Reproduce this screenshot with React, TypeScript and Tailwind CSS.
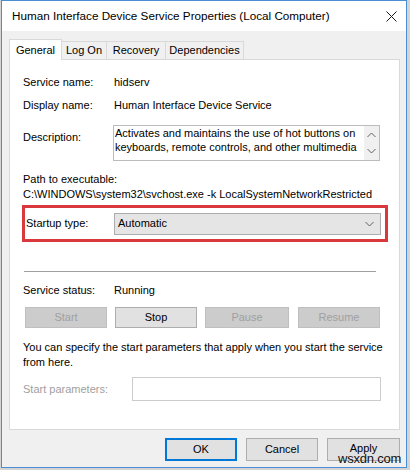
import React from "react";

const font = { fontFamily: '"Liberation Sans", Arial, sans-serif' };

function Chevron({ up = false }: { up?: boolean }) {
  return (
    <svg width="9" height="6" viewBox="0 0 9 6" className="block">
      <path
        d={up ? "M0.5 5 L4.5 1 L8.5 5" : "M0.5 1 L4.5 5 L8.5 1"}
        fill="none"
        stroke="#606060"
        strokeWidth="1"
      />
    </svg>
  );
}

function Tab({ label, active = false, w }: { label: string; active?: boolean; w: string }) {
  return active ? (
    <div
      className={`${w} h-[21px] -mb-px relative z-10 bg-white border border-b-0 border-[#d9d9d9] flex items-center justify-center text-[11px] leading-none text-black`}
    >
      {label}
    </div>
  ) : (
    <div
      className={`${w} h-[18px] bg-[#f0f0f0] border border-b-0 border-l-0 border-[#d9d9d9] flex items-center justify-center text-[11px] leading-none text-black`}
    >
      {label}
    </div>
  );
}

function ActionButton({
  label,
  enabled = false,
  className = "",
}: {
  label: string;
  enabled?: boolean;
  className?: string;
}) {
  return (
    <div
      className={`h-[21px] flex items-center justify-center text-[11px] border ${
        enabled
          ? "bg-[#e1e1e1] border-[#adadad] text-black"
          : "bg-[#cccccc] border-[#bfbfbf] text-[#a0a0a0]"
      } ${className}`}
    >
      {label}
    </div>
  );
}

export default function App() {
  return (
    <div className="w-[410px] h-[470px] bg-[#d4d4d4] overflow-hidden" style={font}>
      <div className="relative ml-[1px] w-[406px] h-[468px] border border-[#4a8fd4] bg-[#f0f0f0] flex flex-col">
        {/* title bar */}
        <div className="h-[30px] bg-white flex items-center justify-between pl-[10px] pr-[9px] shrink-0">
          <span className="text-[11.7px] text-black">
            Human Interface Device Service Properties (Local Computer)
          </span>
          <svg width="11" height="11" viewBox="0 0 11 11">
            <path d="M0.5 0.5 L10.5 10.5 M10.5 0.5 L0.5 10.5" stroke="#1a1a1a" strokeWidth="1" />
          </svg>
        </div>

        {/* tabs */}
        <div className="flex items-end pl-[7px] pt-[8px]">
          <Tab label="General" active w="w-[53px]" />
          <Tab label="Log On" w="w-[45px]" />
          <Tab label="Recovery" w="w-[59px]" />
          <Tab label="Dependencies" w="w-[78px]" />
        </div>

        {/* general page */}
        <div className="ml-[7px] w-[391px] h-[371px] bg-white border border-[#d9d9d9] text-[11px] text-black flex flex-col">
          <div className="mt-[14px] ml-[13px] h-[16px] flex items-center">
            <span className="w-[91px]">Service name:</span>
            <span>hidserv</span>
          </div>
          <div className="mt-[7px] ml-[13px] h-[16px] flex items-center">
            <span className="w-[91px]">Display name:</span>
            <span>Human Interface Device Service</span>
          </div>

          <div className="mt-[12px] ml-[13px] flex items-start">
            <span className="w-[90px] mt-[4px] leading-[16px]">Description:</span>
            <div className="w-[267px] h-[36px] border border-[#bcbcbc] flex">
              <div className="flex-1 pl-[1px] leading-[14px]">
                Activates and maintains the use of hot buttons on
                <br />
                keyboards, remote controls, and other multimedia
              </div>
              <div className="w-[15px] bg-[#f0f0f0] flex flex-col items-center justify-between py-[6px]">
                <Chevron up />
                <Chevron />
              </div>
            </div>
          </div>

          <div className="mt-[11px] ml-[13px] h-[15px] leading-[15px]">Path to executable:</div>
          <div className="ml-[13px] h-[15px] leading-[15px] whitespace-nowrap">
            C:\WINDOWS\system32\svchost.exe -k LocalSystemNetworkRestricted
          </div>

          <div className="mt-[3px] ml-[12px] w-[366px] h-[37px] border-[3px] border-[#d9383c] flex items-center">
            <span className="w-[89px] pl-[1px]">Startup type:</span>
            <div className="w-[267px] h-[22px] bg-[#e5e5e5] border border-[#adadad] flex items-center justify-between pl-[3px] pr-[6px]">
              <span>Automatic</span>
              <Chevron />
            </div>
          </div>

          <div className="mt-[29px] ml-[14px] w-[352px] h-px bg-[#a0a0a0]" />

          <div className="mt-[10px] ml-[13px] h-[16px] flex items-center">
            <span className="w-[91px]">Service status:</span>
            <span>Running</span>
          </div>

          <div className="mt-[9px] ml-[15px] flex">
            <ActionButton label="Start" className="w-[82px]" />
            <ActionButton label="Stop" enabled className="w-[82px] ml-[8px]" />
            <ActionButton label="Pause" className="w-[84px] ml-[8px]" />
            <ActionButton label="Resume" className="w-[82px] ml-[9px]" />
          </div>

          <div className="mt-[12px] ml-[13px] leading-[15px] whitespace-nowrap">
            You can specify the start parameters that apply when you start the service
            <br />
            from here.
          </div>

          <div className="mt-[7px] ml-[13px] flex items-center">
            <span className="w-[109px] text-[#a0a0a0]">Start parameters:</span>
            <div className="w-[249px] h-[24px] border border-[#cccccc] bg-white" />
          </div>
        </div>

        {/* dialog buttons */}
        <div className="mt-[8px] flex justify-end pr-[6px] gap-[9px]">
          <div className="w-[72px] h-[23px] bg-[#e1e1e1] border-2 border-[#0078d7] flex items-center justify-center text-[11px]">
            OK
          </div>
          <div className="w-[72px] h-[23px] bg-[#e1e1e1] border border-[#adadad] flex items-center justify-center text-[11px]">
            Cancel
          </div>
          <div className="w-[73px] h-[23px] bg-[#e1e1e1] border border-[#adadad] flex justify-center pt-[4px] text-[11px] leading-[10px]">
            Apply
          </div>
        </div>

        <span className="absolute left-[336px] top-[452px] text-[13px] leading-[12px] text-[#111] tracking-[-0.2px]">
          wsxdn.com
        </span>
      </div>
    </div>
  );
}
